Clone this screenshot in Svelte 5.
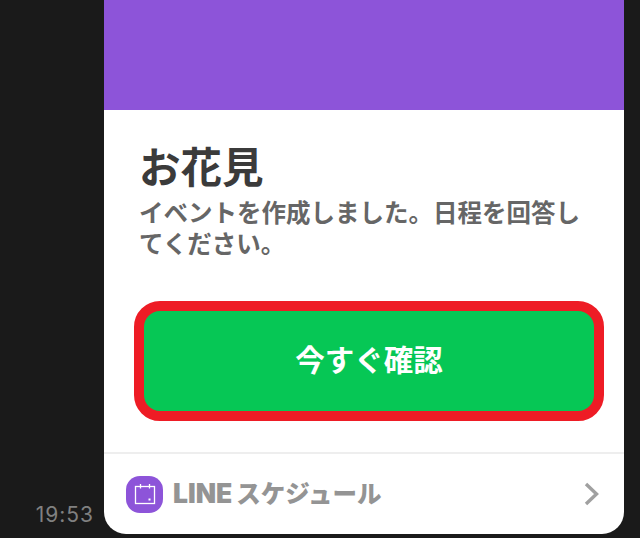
<script>
	let title = 'お花見';
	let message = 'イベントを作成しました。日程を回答してください。';
	let action = '今すぐ確認';
	let time = '19:53';
</script>

<main class="chat">
	<div class="time">{time}</div>
	<section class="card">
		<div class="hero"></div>
		<div class="body">
			<h1>{title}</h1>
			<p>{message}</p>
		</div>
		<div class="action">
			<button>{action}</button>
		</div>
		<footer>
			<span class="logo">
				<svg width="24" height="24" viewBox="0 0 24 24" fill="none" stroke="#fff" stroke-width="1.3">
					<rect x="2.500" y="4.500" width="19" height="17" />
					<path d="M7.500 2v4.500M16.500 2v4.500" />
					<rect x="15.500" y="16.500" width="2" height="2" fill="#fff" stroke="none" />
				</svg>
			</span>
			<span class="name"><span class="line">LINE</span>スケジュール</span>
			<svg class="chevron" width="16" height="24" viewBox="0 0 16 24" fill="none" stroke="#a0a0a0" stroke-width="3.400">
				<path d="M2 2L12.500 12L2 22" />
			</svg>
		</footer>
	</section>
</main>

<style>
	:global(body) {
		background: #1a1a1a;
		font-family: 'Noto Sans CJK JP', 'Noto Sans', sans-serif;
	}
	.chat {
		display: flex;
		align-items: flex-end;
		height: 538px;
		overflow: hidden;
		padding-bottom: 4px;
		box-sizing: border-box;
	}
	.time {
		width: 104px;
		box-sizing: border-box;
		padding: 0 10px 7px 0;
		text-align: right;
		color: #808080;
		font-family: Inter, 'Liberation Sans', sans-serif;
		font-size: 21px;
		line-height: 24px;
		letter-spacing: 1px;
	}
	.card {
		width: 520px;
		background: #fff;
		border-radius: 0 0 22px 22px;
		overflow: hidden;
	}
	.hero {
		height: 110px;
		background: #8d54d9;
	}
	.body {
		padding: 30px 35px 0;
		height: 160px;
		box-sizing: border-box;
	}
	h1 {
		margin: 0 0 6px;
		font-size: 41.500px;
		line-height: 50px;
		font-weight: 700;
		color: #3b3b3b;
	}
	p {
		margin: 0;
		font-size: 24.500px;
		line-height: 31px;
		font-weight: 700;
		color: #666666;
	}
	.action {
		padding: 31px 20px 31px 30px;
	}
	button {
		display: block;
		width: 100%;
		height: 120px;
		box-sizing: border-box;
		border: 10px solid #ee1c25;
		border-radius: 26px;
		padding: 0 0 6px;
		background: #06c755;
		color: #fff;
		font-family: inherit;
		font-size: 29.500px;
		font-weight: 700;
	}
	footer {
		display: flex;
		align-items: center;
		height: 82px;
		box-sizing: border-box;
		border-top: 2px solid #eeeeee;
		padding: 0 24px 0 22px;
	}
	.logo {
		display: flex;
		align-items: center;
		justify-content: center;
		width: 37px;
		height: 37px;
		border-radius: 14px;
		background: #8d54d9;
	}
	.name {
		margin: -4px 0 0 10px;
		font-size: 24.500px;
		font-weight: 900;
		color: #949494;
		white-space: nowrap;
	}
	.line {
		margin-right: 4px;
		font-family: Inter, 'Noto Sans', sans-serif;
		font-size: 26.500px;
		font-weight: 900;
	}
	.chevron {
		margin-left: auto;
	}
</style>
